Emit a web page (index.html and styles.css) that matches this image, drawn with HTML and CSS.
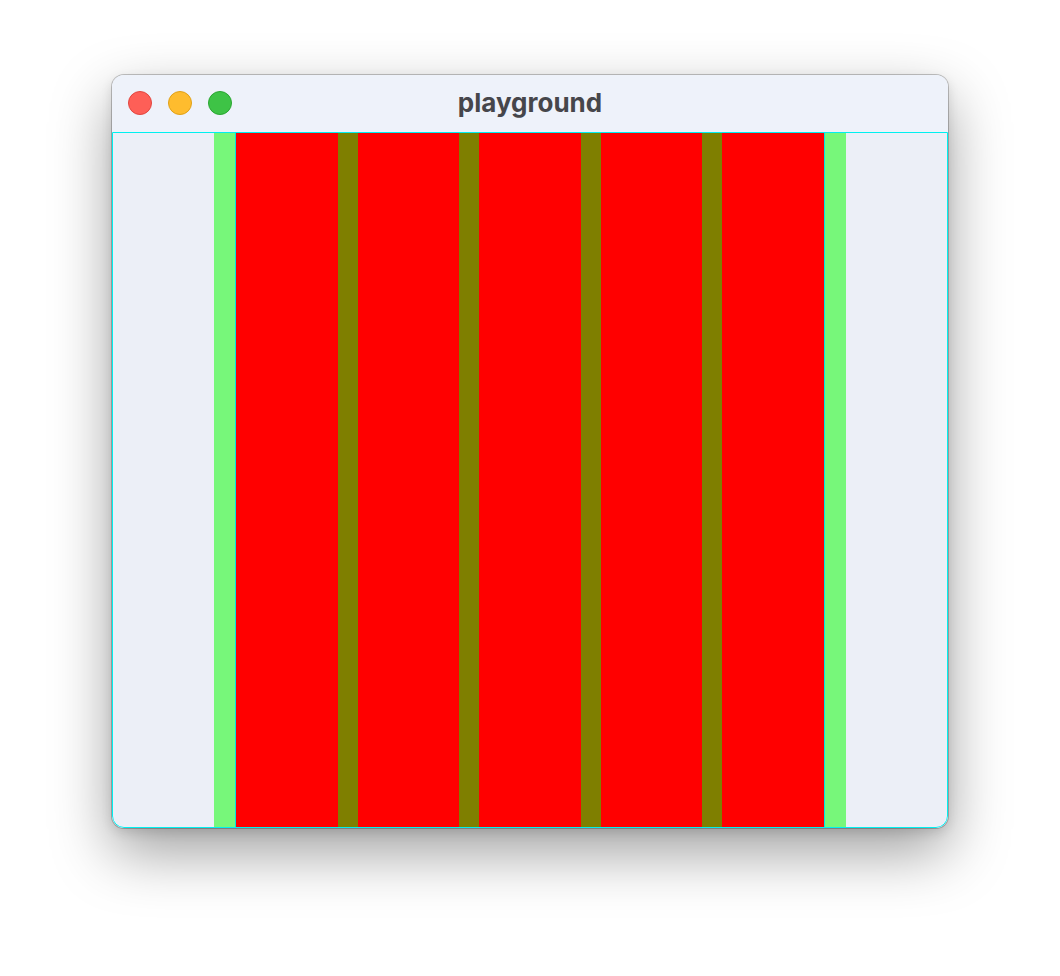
FILE: index.html
```html
<!DOCTYPE html>
<html>
<head>
<meta charset="utf-8">
<link rel="stylesheet" href="styles.css">
</head>
<body>
<div class="window">
  <div class="titlebar">
    <div class="lights">
      <span class="light red"></span>
      <span class="light yellow"></span>
      <span class="light green"></span>
    </div>
    <div class="title">playground</div>
  </div>
  <div class="content">
    <div class="strip">
      <div class="row">
        <div class="cell"></div>
        <div class="cell"></div>
        <div class="cell"></div>
        <div class="cell"></div>
        <div class="cell"></div>
      </div>
    </div>
  </div>
</div>
</body>
</html>
```
FILE: styles.css
```css
html, body {
  margin: 0;
  padding: 0;
  background: #ffffff;
}
body {
  width: 1060px;
  height: 976px;
  overflow: hidden;
  padding-top: 75px;
  box-sizing: border-box;
}
.window {
  margin-left: 112px;
  width: 836px;
  height: 753px;
  border-radius: 12px;
  overflow: hidden;
  background: #eef2fa;
  box-shadow: 0 0 0 1px rgba(0,0,0,0.22), 0 24px 60px rgba(0,0,0,0.38), 0 4px 12px rgba(0,0,0,0.12);
  display: flex;
  flex-direction: column;
}
.titlebar {
  height: 57px;
  position: relative;
  display: flex;
  align-items: center;
  justify-content: center;
  background: #eef2fa;
  flex: none;
}
.lights {
  position: absolute;
  left: 16px;
  top: 16px;
  display: flex;
  gap: 16px;
}
.light {
  width: 24px;
  height: 24px;
  border-radius: 50%;
  box-sizing: border-box;
}
.light.red { background: #fe5f57; border: 1px solid #e2463f; }
.light.yellow { background: #febc2e; border: 1px solid #e1a116; }
.light.green { background: #3ec346; border: 1px solid #2aa631; }
.title {
  font-family: Inter, "Liberation Sans", sans-serif;
  font-weight: 700;
  font-size: 26px;
  color: #46464b;
  margin-top: -2px;
}
.content {
  flex: 1;
  border: 1px solid #00f0f0;
  background: #eceff7;
  display: flex;
  justify-content: center;
  border-bottom-left-radius: 12px;
  border-bottom-right-radius: 12px;
}
.strip {
  background: #77f77a;
  padding: 0 21px;
  display: flex;
}
.row {
  display: flex;
  gap: 20px;
  background: #7f7f00;
  border-left: 1px solid #00e6e6;
  border-right: 1px solid #00e6e6;
}
.cell {
  width: 101.6px;
  background: #ff0000;
}
```
